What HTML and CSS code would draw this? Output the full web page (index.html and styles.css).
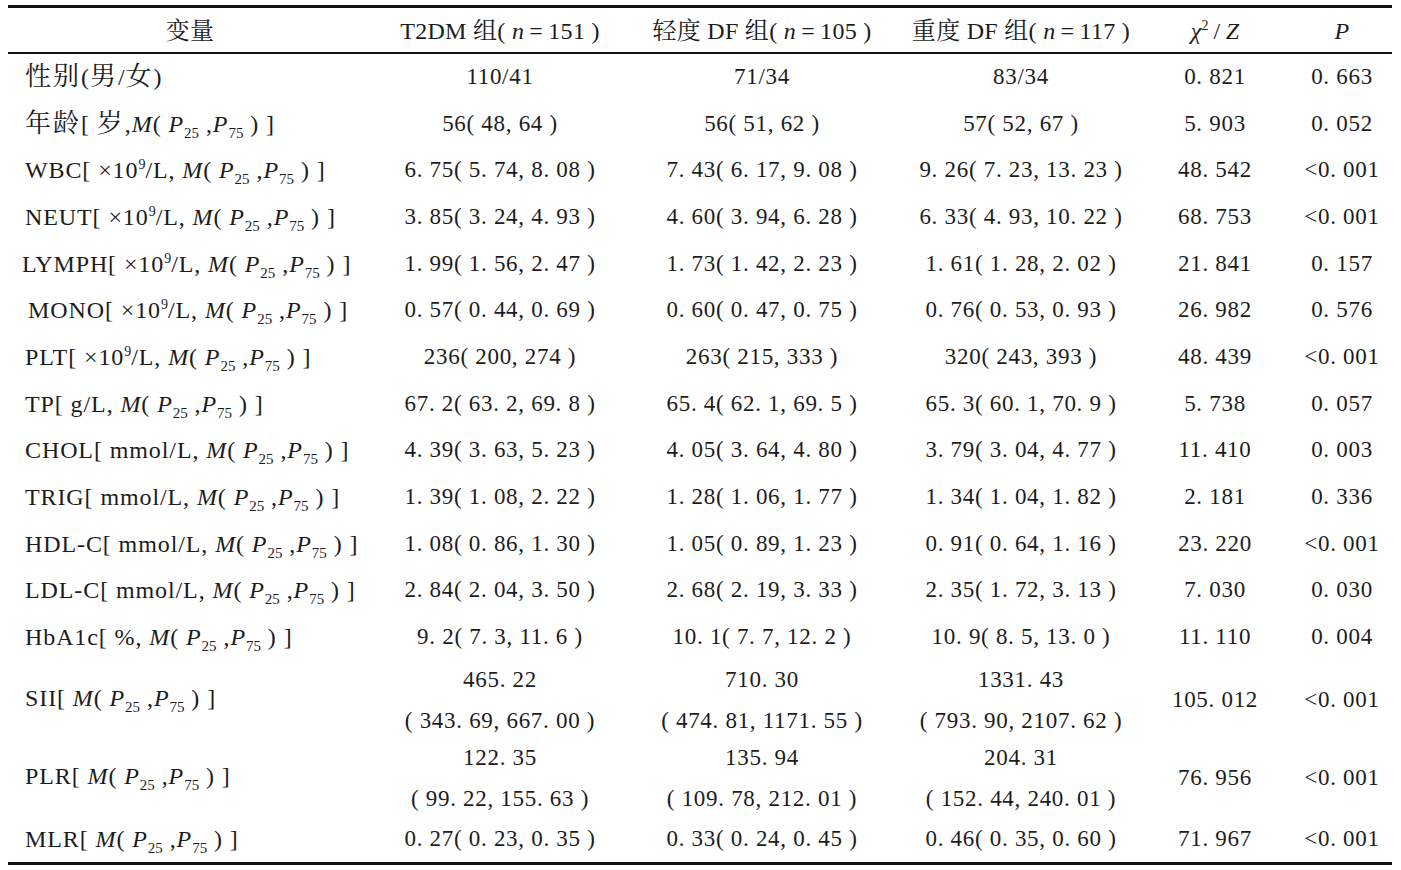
FILE: index.html
```html
<!DOCTYPE html>
<html lang="zh-CN">
<head>
<meta charset="utf-8">
<title>表</title>
<link rel="stylesheet" href="styles.css">
</head>
<body>
<table class="stats">
  <colgroup>
    <col class="c-var"><col class="c-g1"><col class="c-g2"><col class="c-g3"><col class="c-stat"><col class="c-p">
  </colgroup>
  <thead>
    <tr>
      <th class="h-var">变量</th>
      <th>T2DM 组( <i>n</i>&#8201;=&#8201;151 )</th>
      <th>轻度 DF 组( <i>n</i>&#8201;=&#8201;105 )</th>
      <th>重度 DF 组( <i>n</i>&#8201;=&#8201;117 )</th>
      <th><i>χ</i><sup>2</sup>&#8201;/&#8201;<i>Z</i></th>
      <th><i>P</i></th>
    </tr>
  </thead>
  <tbody>
    <tr><td class="label"><span class="cjk">性别</span>(<span class="cjk">男</span>/<span class="cjk">女</span>)</td><td>110/41</td><td>71/34</td><td>83/34</td><td>0. 821</td><td>0. 663</td></tr>
    <tr><td class="label"><span class="cjk">年龄</span>[ <span class="cjk">岁</span>,<i>M</i>( <i>P</i><sub>25</sub> ,<i>P</i><sub>75</sub> ) ]</td><td>56( 48, 64 )</td><td>56( 51, 62 )</td><td>57( 52, 67 )</td><td>5. 903</td><td>0. 052</td></tr>
    <tr><td class="label">WBC[ ×10<sup>9</sup>/L, <i>M</i>( <i>P</i><sub>25</sub> ,<i>P</i><sub>75</sub> ) ]</td><td>6. 75( 5. 74, 8. 08 )</td><td>7. 43( 6. 17, 9. 08 )</td><td>9. 26( 7. 23, 13. 23 )</td><td>48. 542</td><td>&lt;0. 001</td></tr>
    <tr><td class="label">NEUT[ ×10<sup>9</sup>/L, <i>M</i>( <i>P</i><sub>25</sub> ,<i>P</i><sub>75</sub> ) ]</td><td>3. 85( 3. 24, 4. 93 )</td><td>4. 60( 3. 94, 6. 28 )</td><td>6. 33( 4. 93, 10. 22 )</td><td>68. 753</td><td>&lt;0. 001</td></tr>
    <tr><td class="label shift-l">LYMPH[ ×10<sup>9</sup>/L, <i>M</i>( <i>P</i><sub>25</sub> ,<i>P</i><sub>75</sub> ) ]</td><td>1. 99( 1. 56, 2. 47 )</td><td>1. 73( 1. 42, 2. 23 )</td><td>1. 61( 1. 28, 2. 02 )</td><td>21. 841</td><td>0. 157</td></tr>
    <tr><td class="label shift-r">MONO[ ×10<sup>9</sup>/L, <i>M</i>( <i>P</i><sub>25</sub> ,<i>P</i><sub>75</sub> ) ]</td><td>0. 57( 0. 44, 0. 69 )</td><td>0. 60( 0. 47, 0. 75 )</td><td>0. 76( 0. 53, 0. 93 )</td><td>26. 982</td><td>0. 576</td></tr>
    <tr><td class="label">PLT[ ×10<sup>9</sup>/L, <i>M</i>( <i>P</i><sub>25</sub> ,<i>P</i><sub>75</sub> ) ]</td><td>236( 200, 274 )</td><td>263( 215, 333 )</td><td>320( 243, 393 )</td><td>48. 439</td><td>&lt;0. 001</td></tr>
    <tr><td class="label">TP[ g/L, <i>M</i>( <i>P</i><sub>25</sub> ,<i>P</i><sub>75</sub> ) ]</td><td>67. 2( 63. 2, 69. 8 )</td><td>65. 4( 62. 1, 69. 5 )</td><td>65. 3( 60. 1, 70. 9 )</td><td>5. 738</td><td>0. 057</td></tr>
    <tr><td class="label">CHOL[ mmol/L, <i>M</i>( <i>P</i><sub>25</sub> ,<i>P</i><sub>75</sub> ) ]</td><td>4. 39( 3. 63, 5. 23 )</td><td>4. 05( 3. 64, 4. 80 )</td><td>3. 79( 3. 04, 4. 77 )</td><td>11. 410</td><td>0. 003</td></tr>
    <tr><td class="label">TRIG[ mmol/L, <i>M</i>( <i>P</i><sub>25</sub> ,<i>P</i><sub>75</sub> ) ]</td><td>1. 39( 1. 08, 2. 22 )</td><td>1. 28( 1. 06, 1. 77 )</td><td>1. 34( 1. 04, 1. 82 )</td><td>2. 181</td><td>0. 336</td></tr>
    <tr><td class="label">HDL-C[ mmol/L, <i>M</i>( <i>P</i><sub>25</sub> ,<i>P</i><sub>75</sub> ) ]</td><td>1. 08( 0. 86, 1. 30 )</td><td>1. 05( 0. 89, 1. 23 )</td><td>0. 91( 0. 64, 1. 16 )</td><td>23. 220</td><td>&lt;0. 001</td></tr>
    <tr><td class="label">LDL-C[ mmol/L, <i>M</i>( <i>P</i><sub>25</sub> ,<i>P</i><sub>75</sub> ) ]</td><td>2. 84( 2. 04, 3. 50 )</td><td>2. 68( 2. 19, 3. 33 )</td><td>2. 35( 1. 72, 3. 13 )</td><td>7. 030</td><td>0. 030</td></tr>
    <tr><td class="label">HbA1c[ %, <i>M</i>( <i>P</i><sub>25</sub> ,<i>P</i><sub>75</sub> ) ]</td><td>9. 2( 7. 3, 11. 6 )</td><td>10. 1( 7. 7, 12. 2 )</td><td>10. 9( 8. 5, 13. 0 )</td><td>11. 110</td><td>0. 004</td></tr>
    <tr class="double"><td class="label">SII[ <i>M</i>( <i>P</i><sub>25</sub> ,<i>P</i><sub>75</sub> ) ]</td><td><div class="two">465. 22<br>( 343. 69, 667. 00 )</div></td><td><div class="two">710. 30<br>( 474. 81, 1171. 55 )</div></td><td><div class="two">1331. 43<br>( 793. 90, 2107. 62 )</div></td><td>105. 012</td><td>&lt;0. 001</td></tr>
    <tr class="double"><td class="label">PLR[ <i>M</i>( <i>P</i><sub>25</sub> ,<i>P</i><sub>75</sub> ) ]</td><td><div class="two">122. 35<br>( 99. 22, 155. 63 )</div></td><td><div class="two">135. 94<br>( 109. 78, 212. 01 )</div></td><td><div class="two">204. 31<br>( 152. 44, 240. 01 )</div></td><td>76. 956</td><td>&lt;0. 001</td></tr>
    <tr class="last"><td class="label">MLR[ <i>M</i>( <i>P</i><sub>25</sub> ,<i>P</i><sub>75</sub> ) ]</td><td>0. 27( 0. 23, 0. 35 )</td><td>0. 33( 0. 24, 0. 45 )</td><td>0. 46( 0. 35, 0. 60 )</td><td>71. 967</td><td>&lt;0. 001</td></tr>
  </tbody>
</table>
</body>
</html>
```

FILE: styles.css
```css
html, body {
  background: #ffffff;
}

body {
  margin: 5px 9px 0 8px;
  font-family: "Liberation Serif", "Noto Serif CJK SC", "Noto Sans CJK SC", serif;
  font-size: 23px;
  letter-spacing: 0.7px;
  color: #1c1c1c;
}

.stats {
  width: 1384px;
  table-layout: fixed;
  border-collapse: separate;
  border-spacing: 0;
  border-top: 3px solid #111;
  border-bottom: 3px solid #111;
}

.c-var { width: 372px; }
.c-g1 { width: 240px; }
.c-g2 { width: 284px; }
.c-g3 { width: 234px; }
.c-stat { width: 154px; }
.c-p { width: 100px; }

.stats thead tr {
  height: 46px;
}

.stats th {
  font-weight: normal;
  font-size: 24px;
  letter-spacing: 0.3px;
  line-height: 28px;
  padding: 2px 0 0 0;
  border-bottom: 2px solid #111;
  white-space: nowrap;
  text-align: center;
  vertical-align: middle;
}

.stats th.h-var {
  padding-right: 8px;
}

.stats tbody tr {
  height: 46.7px;
}

.stats td {
  padding: 0 0 1px 0;
  text-align: center;
  vertical-align: middle;
  white-space: nowrap;
  line-height: 28px;
}

.stats td.label {
  text-align: left;
  padding-left: 17px;
  font-size: 24px;
  letter-spacing: 0.9px;
}

.cjk {
  font-size: 26px;
  letter-spacing: 2px;
}

.stats td.shift-l {
  padding-left: 14px;
}

.stats td.shift-r {
  padding-left: 20px;
}

.stats tbody tr.double {
  height: 78px;
}

.stats tr.double td {
  padding-top: 0;
  padding-bottom: 0;
}

.stats tr.double td.label {
  padding-bottom: 4px;
}

.two {
  line-height: 41px;
  margin: -2px 0;
}

.stats tbody tr.last {
  height: 45px;
}

i {
  font-style: italic;
}

sub {
  font-size: 15px;
  letter-spacing: 0;
  line-height: 0;
  vertical-align: -6px;
}

sup {
  font-size: 14px;
  letter-spacing: 0;
  line-height: 0;
  vertical-align: 9px;
}
```
